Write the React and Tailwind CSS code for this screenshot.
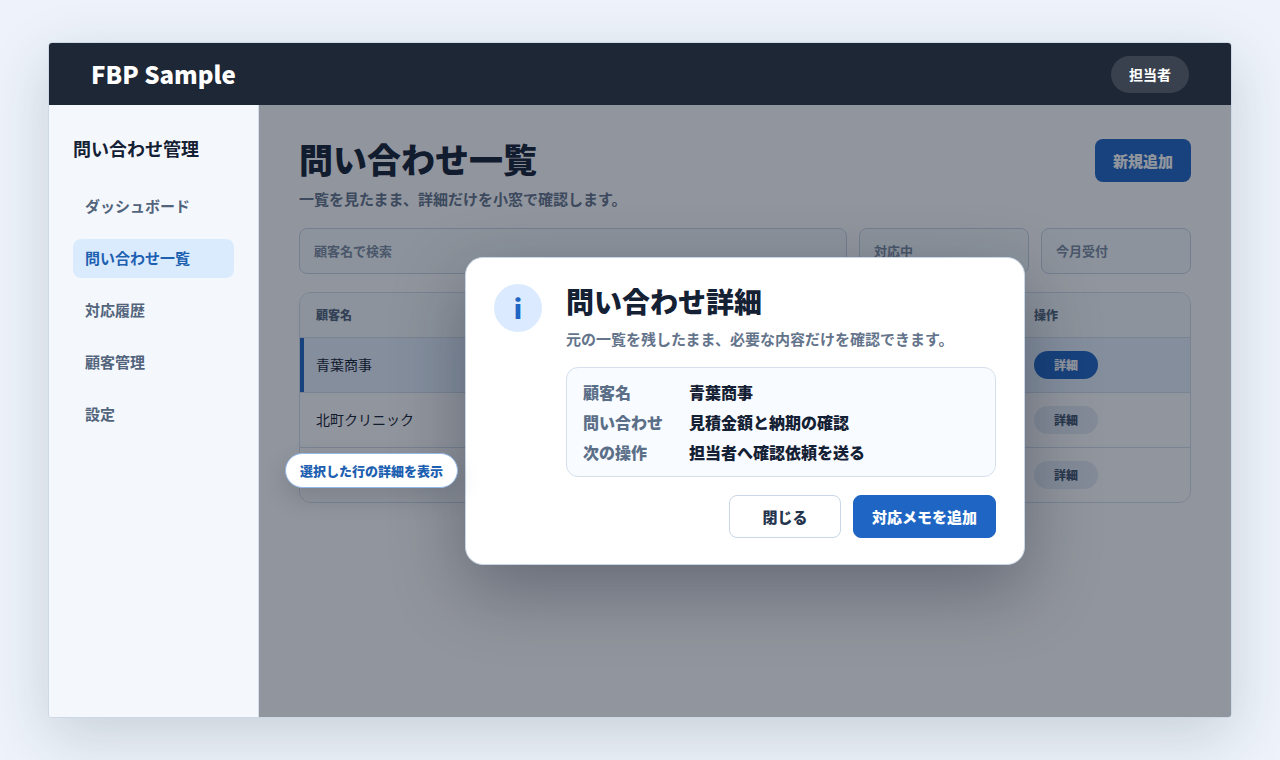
import React from "react";

const navItems = [
  { label: "ダッシュボード", active: false },
  { label: "問い合わせ一覧", active: true },
  { label: "対応履歴", active: false },
  { label: "顧客管理", active: false },
  { label: "設定", active: false },
];

const inquiries = [
  { id: 1, customer: "青葉商事", selected: true },
  { id: 2, customer: "北町クリニック", selected: false },
  { id: 3, customer: "", selected: false },
];

const details = [
  { label: "顧客名", value: "青葉商事" },
  { label: "問い合わせ", value: "見積金額と納期の確認" },
  { label: "次の操作", value: "担当者へ確認依頼を送る" },
];

const Header = () => (
  <header className="flex h-[62px] shrink-0 items-center justify-between bg-[#1e2736] px-[42px] text-white">
    <span className="text-2xl leading-8 font-black">FBP Sample</span>
    <button className="rounded-full bg-white/12 px-[18px] py-2 text-sm leading-[21px] font-bold">
      担当者
    </button>
  </header>
);

const Sidebar = () => (
  <aside className="w-[210px] shrink-0 border-r border-[#d5deea] bg-[#f4f8fd] px-6 py-8">
    <h2 className="text-lg leading-[22px] font-bold text-[#142033]">問い合わせ管理</h2>
    <nav className="mt-7 flex flex-col gap-[13px]">
      {navItems.map((item) => (
        <a
          key={item.label}
          href="#"
          className={`rounded-lg px-3 pt-2 pb-[9px] text-[15px] leading-[22px] font-bold ${
            item.active ? "bg-[#dbebfe] text-[#1d5fb0]" : "text-[#52647c]"
          }`}
        >
          {item.label}
        </a>
      ))}
    </nav>
  </aside>
);

const Filters = () => (
  <div className="mt-[18px] grid grid-cols-[1fr_170px_150px] gap-3 text-[13px] font-bold text-[#7c8ba1]">
    <input
      type="text"
      aria-label="顧客名で検索"
      placeholder="顧客名で検索"
      className="h-[46px] rounded-lg border border-[#c9d6e6] bg-[#f6fcfd] px-3.5 pb-0.5 placeholder:text-[#7c8ba1]"
    />
    <select
      aria-label="対応状況"
      className="h-[46px] appearance-none rounded-lg border border-[#c9d6e6] bg-[#f6fcfd] px-3.5"
    >
      <option>対応中</option>
    </select>
    <select
      aria-label="受付期間"
      className="h-[46px] appearance-none rounded-lg border border-[#c9d6e6] bg-[#f6fcfd] px-3.5"
    >
      <option>今月受付</option>
    </select>
  </div>
);

const InquiryTable = () => (
  <div className="mt-[18px] overflow-hidden rounded-xl border border-[#d5deea]">
    <table className="w-full table-fixed border-separate border-spacing-0 text-left text-sm text-[#142033]">
      <thead>
        <tr className="bg-[#f6fcfd] text-xs text-[#52647c]">
          <th className="h-[45px] border-b border-[#d5deea] px-4 font-black">顧客名</th>
          <th className="w-[172px] border-b border-[#d5deea] px-4 font-black">操作</th>
        </tr>
      </thead>
      <tbody className="[&>tr:last-child>td]:h-[54px] [&>tr:last-child>td]:border-b-0">
        {inquiries.map((row) => (
          <tr key={row.id} className={row.selected ? "bg-[#e8f3ff]" : "bg-white"}>
            <td
              className={`h-[55px] border-b border-[#d5deea] px-4 pb-0.5 ${
                row.selected ? "shadow-[inset_4px_0_0_#1f66c4]" : ""
              }`}
            >
              {row.customer}
            </td>
            <td className="border-b border-[#d5deea] px-4">
              <button
                className={`block h-7 w-16 rounded-full text-xs font-black ${
                  row.selected ? "bg-[#1f66c4] text-white" : "bg-[#e5edf5] text-[#41536b]"
                }`}
              >
                詳細
              </button>
            </td>
          </tr>
        ))}
      </tbody>
    </table>
  </div>
);

const DetailDialog = () => (
  <div
    role="dialog"
    aria-labelledby="detail-title"
    className="flex w-[560px] gap-6 rounded-[18px] border border-[#c9d6e6] bg-white px-7 py-[26px] shadow-[0_24px_70px_rgba(15,23,42,0.34)]"
  >
    <div className="flex size-12 shrink-0 items-center justify-center rounded-full bg-[#dbeafe] text-[26px] leading-8 font-black text-[#1f66c4]">
      i
    </div>
    <div className="flex-1">
      <h2 id="detail-title" className="text-[28px] leading-[34px] font-black text-[#142033]">
        問い合わせ詳細
      </h2>
      <p className="mt-2.5 text-[15px] leading-[22px] font-bold text-[#64748b]">
        元の一覧を残したまま、必要な内容だけを確認できます。
      </p>
      <dl className="mt-[17px] grid grid-cols-[96px_1fr] gap-x-2.5 gap-y-1.5 rounded-xl border border-[#d5e0ec] bg-[#f8fbff] px-4 py-3 text-base font-black">
        {details.map((item) => (
          <React.Fragment key={item.label}>
            <dt className="text-[#5b6f88]">{item.label}</dt>
            <dd className="text-[#142033]">{item.value}</dd>
          </React.Fragment>
        ))}
      </dl>
      <div className="mt-[18px] flex justify-end gap-3 text-[15px] leading-[21px] font-black">
        <button className="min-w-28 rounded-lg border border-[#c9d6e6] bg-white px-[18px] py-2.5 text-[#24344d]">
          閉じる
        </button>
        <button className="rounded-lg border border-[#1f66c4] bg-[#1f66c4] px-[18px] py-2.5 text-white">
          対応メモを追加
        </button>
      </div>
    </div>
  </div>
);

const App = () => {
  return (
    <div className="flex min-h-screen bg-[#eef3fb] px-12 py-[42px] font-['Noto_Sans_CJK_JP',sans-serif]">
      <div className="flex flex-1 flex-col overflow-hidden rounded border border-[#cbd8e6] bg-white shadow-[0_18px_60px_rgba(25,50,50,0.18)]">
        <Header />
        <div className="flex flex-1">
          <Sidebar />
          <main className="relative flex-1 px-10 py-[34px]">
            <div className="flex items-start justify-between">
              <div>
                <h1 className="text-[34px] leading-10 font-black text-[#142033]">
                  問い合わせ一覧
                </h1>
                <p className="mt-[9px] text-[15px] leading-[22px] font-bold text-[#64748b]">
                  一覧を見たまま、詳細だけを小窓で確認します。
                </p>
              </div>
              <button className="rounded-lg bg-[#1f66c4] px-[18px] py-[11px] text-[15px] leading-[21px] font-black text-white">
                新規追加
              </button>
            </div>
            <Filters />
            <InquiryTable />

            {/* Dimmed layer with the dialog */}
            <div className="absolute inset-0 flex items-center justify-center bg-[rgba(15,23,42,0.46)]">
              <DetailDialog />
            </div>
            <div className="absolute top-[348px] left-[26px] rounded-full border border-[#93b8e8] bg-white px-3.5 py-1.5 text-[13px] leading-[21px] font-black text-[#1d5fb0] shadow-[0_10px_24px_rgba(15,23,42,0.16)]">
              選択した行の詳細を表示
            </div>
          </main>
        </div>
      </div>
    </div>
  );
};

export default App;
